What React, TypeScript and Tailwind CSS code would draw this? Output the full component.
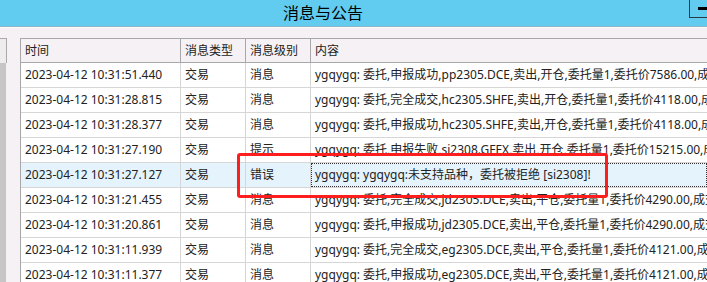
import React from 'react';

const rows = [
  { time: '2023-04-12 10:31:51.440', type: '交易', level: '消息', content: 'ygqygq: 委托,申报成功,pp2305.DCE,卖出,开仓,委托量1,委托价7586.00,成交价0.00' },
  { time: '2023-04-12 10:31:28.815', type: '交易', level: '消息', content: 'ygqygq: 委托,完全成交,hc2305.SHFE,卖出,开仓,委托量1,委托价4118.00,成交价4118.00' },
  { time: '2023-04-12 10:31:28.377', type: '交易', level: '消息', content: 'ygqygq: 委托,申报成功,hc2305.SHFE,卖出,开仓,委托量1,委托价4118.00,成交价0.00' },
  { time: '2023-04-12 10:31:27.190', type: '交易', level: '提示', content: 'ygqygq: 委托,申报失败,si2308.GFEX,卖出,开仓,委托量1,委托价15215.00,成交价0.00' },
  { time: '2023-04-12 10:31:27.127', type: '交易', level: '错误', content: 'ygqygq: ygqygq:未支持品种，委托被拒绝 [si2308]!', selected: true },
  { time: '2023-04-12 10:31:21.455', type: '交易', level: '消息', content: 'ygqygq: 委托,完全成交,jd2305.DCE,卖出,平仓,委托量1,委托价4290.00,成交价4290.00' },
  { time: '2023-04-12 10:31:20.861', type: '交易', level: '消息', content: 'ygqygq: 委托,申报成功,jd2305.DCE,卖出,平仓,委托量1,委托价4290.00,成交价0.00' },
  { time: '2023-04-12 10:31:11.939', type: '交易', level: '消息', content: 'ygqygq: 委托,完全成交,eg2305.DCE,卖出,平仓,委托量1,委托价4121.00,成交价4121.00' },
  { time: '2023-04-12 10:31:11.377', type: '交易', level: '消息', content: 'ygqygq: 委托,申报成功,eg2305.DCE,卖出,平仓,委托量1,委托价4121.00,成交价0.00' },
];

const cols = 'grid grid-cols-[160px_65px_65px_1fr]';

export default function App() {
  return (
    <div
      className="relative w-[707px] h-[282px] overflow-hidden bg-[#f5f1f4] text-[#222]"
      style={{ fontFamily: '"Noto Sans", "Noto Sans CJK SC", sans-serif' }}
    >
      {/* Title bar */}
      <div className="relative h-[26px] bg-[#62cbf0] flex items-center pl-[283px]">
        <span className="text-[16px] leading-none text-black">消息与公告</span>
        <div className="absolute left-[689px] top-0 w-[30px] h-[18px] border border-[#2a3a44] border-t-0">
          <div className="absolute left-[8px] top-[7px] w-[20px] h-[3px] bg-black" />
        </div>
      </div>
      <div className="h-px bg-[#8fb5c6]" />
      <div className="h-px bg-[#fbfafb]" />

      {/* Body */}
      <div className="flex pt-[10px]">
        {/* Left strip */}
        <div className="w-[20px] shrink-0 flex flex-col">
          <div className="w-[7px] h-[25px] border-t border-r border-[#a8a8a8] bg-[#efecee]" />
          <div className="w-[6px] h-[240px] bg-[#c6c6c6]" />
        </div>

        {/* Table */}
        <div className="w-[687px] border-l border-[#a8a8a8] text-[12px]">
          <div className={`${cols} h-[25px] border-t border-b border-[#a8a8a8] bg-[#f5f1f4]`}>
            {['时间', '消息类型', '消息级别', '内容'].map((h) => (
              <div key={h} className="flex items-center pl-[4px] border-r border-[#a8a8a8] last:border-r-0 whitespace-nowrap">
                {h}
              </div>
            ))}
          </div>
          {rows.map((r) => (
            <div
              key={r.time}
              className={`${cols} h-[25px] border-b border-[#d6d6d6] ${r.selected ? 'bg-[#e5f3fd]' : 'bg-white'}`}
            >
              <div className="flex items-center pl-[4px] border-r border-[#d6d6d6] whitespace-nowrap">{r.time}</div>
              <div className="flex items-center pl-[4px] border-r border-[#d6d6d6] whitespace-nowrap">{r.type}</div>
              <div className="flex items-center pl-[4px] border-r border-[#d6d6d6] whitespace-nowrap">{r.level}</div>
              <div className="relative flex items-center pl-[4px] overflow-hidden whitespace-nowrap">
                {r.selected && <div className="absolute inset-0 border border-dotted border-[#333]" />}
                {r.content}
              </div>
            </div>
          ))}
        </div>
      </div>

      {/* Red annotation */}
      <div className="absolute left-[237px] top-[153px] w-[371px] h-[45px] border-[3px] border-[#ff1e1e] rounded-[3px]" />
    </div>
  );
}
